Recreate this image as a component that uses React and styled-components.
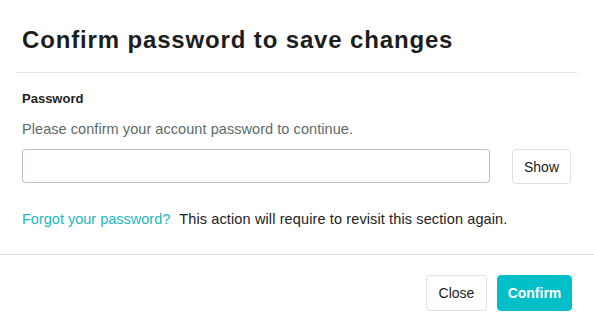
import styled, { createGlobalStyle } from "styled-components";

const GlobalStyle = createGlobalStyle`
  html, body {
    margin: 0;
    padding: 0;
    background: #fff;
    font-family: "Liberation Sans", Arial, sans-serif;
  }
  * { box-sizing: border-box; }
`;

const Modal = styled.div`
  width: 594px;
  height: 329px;
  background: #fff;
  display: flex;
  flex-direction: column;
`;

const Header = styled.div`
  margin: 0 17px 0 16px;
  padding: 25px 6px 17px;
  border-bottom: 1px solid #e2e4e4;
`;

const Title = styled.h1`
  margin: 0;
  font-size: 24px;
  line-height: 30px;
  font-weight: 700;
  letter-spacing: 0.85px;
  color: #1c1e1e;
`;

const Body = styled.div`
  padding: 17px 22px 0;
  height: 181px;
  display: flex;
  flex-direction: column;
`;

const Label = styled.label`
  font-size: 13px;
  line-height: 18px;
  font-weight: 700;
  color: #222;
`;

const Hint = styled.p`
  margin: 12px 0 0;
  font-size: 14.5px;
  line-height: 18px;
  letter-spacing: 0.06px;
  color: #5c6b6a;
`;

const InputRow = styled.div`
  margin-top: 11px;
  display: flex;
  align-items: flex-start;
  gap: 22px;
`;

const Input = styled.input`
  width: 468px;
  height: 34px;
  border: 1px solid #b9c3c1;
  border-radius: 3px;
  padding: 0 10px;
  font: inherit;
  outline: none;
`;

const Button = styled.button`
  height: ${(p) => p.h || 36}px;
  width: ${(p) => p.w}px;
  border-radius: 4px;
  font-family: inherit;
  font-size: 14px;
  cursor: pointer;
  border: 1px solid ${(p) => (p.primary ? "#00bfc8" : "#dde1e1")};
  background: ${(p) => (p.primary ? "#00bfc8" : "#fff")};
  color: ${(p) => (p.primary ? "#fff" : "#222")};
  font-weight: ${(p) => (p.primary ? 700 : 400)};
  padding: 0;
`;

const Note = styled.p`
  margin: 26px 0 0;
  font-size: 14.5px;
  line-height: 18px;
  letter-spacing: 0.12px;
  color: #222;
`;

const Link = styled.a`
  color: #1bb7c4;
  text-decoration: none;
  letter-spacing: 0;
  margin-right: 9px;
  cursor: pointer;
`;

const Footer = styled.div`
  border-top: 1px solid #e2e4e4;
  padding: 20px 22px 0;
  display: flex;
  justify-content: flex-end;
  gap: 10px;
`;

export default function App() {
  return (
    <>
      <GlobalStyle />
      <Modal>
        <Header>
          <Title>Confirm password to save changes</Title>
        </Header>
        <Body>
          <Label>Password</Label>
          <Hint>Please confirm your account password to continue.</Hint>
          <InputRow>
            <Input type="password" />
            <Button w={59} h={35}>Show</Button>
          </InputRow>
          <Note>
            <Link>Forgot your password?</Link>
            This action will require to revisit this section again.
          </Note>
        </Body>
        <Footer>
          <Button w={61}>Close</Button>
          <Button primary w={75}>Confirm</Button>
        </Footer>
      </Modal>
    </>
  );
}
